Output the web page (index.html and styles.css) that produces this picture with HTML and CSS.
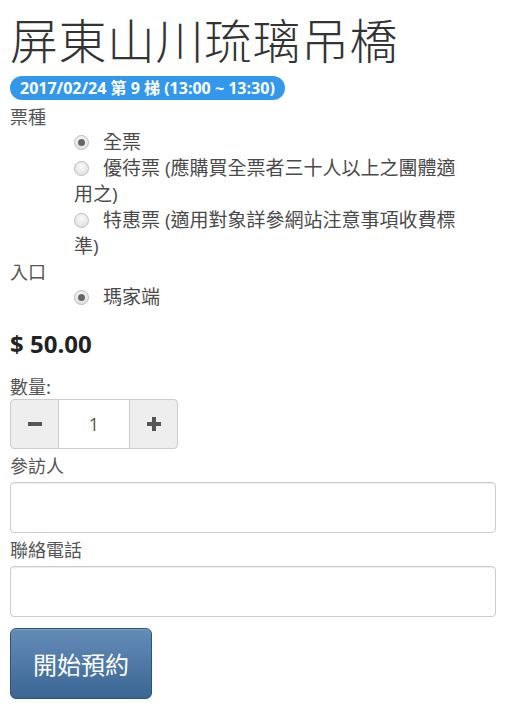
FILE: index.html
```html
<!DOCTYPE html>
<html lang="zh-Hant">
<head>
<meta charset="utf-8">
<title>屏東山川琉璃吊橋</title>
<link rel="stylesheet" href="styles.css">
</head>
<body>
<div class="page">
  <h1 class="title">屏東山川琉璃吊橋</h1>
  <div class="badge-row"><span class="badge">2017/02/24 第 9 梯 (13:00 ~ 13:30)</span></div>

  <div class="label">票種</div>
  <div class="radios">
    <div class="opt"><span class="radio checked"></span><span class="opt-text">全票</span></div>
    <div class="opt"><span class="radio"></span><span class="opt-text">優待票 (應購買全票者三十人以上之團體適用之)</span></div>
    <div class="opt"><span class="radio"></span><span class="opt-text">特惠票 (適用對象詳參網站注意事項收費標準)</span></div>
  </div>

  <div class="label label-gap">入口</div>
  <div class="radios">
    <div class="opt"><span class="radio checked"></span><span class="opt-text">瑪家端</span></div>
  </div>

  <div class="price">$ 50.00</div>

  <div class="label label-qty">數量:</div>
  <div class="qty">
    <button class="qty-btn" type="button" aria-label="minus">
      <svg width="16" height="16" viewBox="0 0 16 16"><rect x="1" y="6" width="14" height="4" fill="#555"/></svg>
    </button>
    <div class="qty-val">1</div>
    <button class="qty-btn" type="button" aria-label="plus">
      <svg width="16" height="16" viewBox="0 0 16 16"><rect x="1" y="6" width="14" height="4" fill="#555"/><rect x="6" y="1" width="4" height="14" fill="#555"/></svg>
    </button>
  </div>

  <div class="label label-gap2">參訪人</div>
  <div class="field"></div>

  <div class="label label-gap2">聯絡電話</div>
  <div class="field"></div>

  <button class="submit" type="button">開始預約</button>
</div>
</body>
</html>
```

FILE: styles.css
```css
* { box-sizing: border-box; }
html, body { margin: 0; padding: 0; background: #fff; }
body {
  font-family: "Open Sans", "Noto Sans CJK TC", sans-serif;
  color: #555;
}
.page { padding: 10px 16px 0 10px; }
.title {
  margin: 0;
  font-family: "Noto Sans CJK TC", sans-serif;
  font-weight: 300;
  font-size: 48px;
  line-height: 56px;
  color: #333;
  letter-spacing: 0.5px;
}
.badge-row { margin-top: 10px; height: 24px; }
.badge {
  display: inline-block;
  height: 24px;
  line-height: 24px;
  padding: 0 10px;
  border-radius: 12px;
  background: #3398ec;
  color: #fff;
  font-weight: 700;
  font-size: 16px;
  white-space: nowrap;
}
.label {
  font-family: "Noto Sans CJK TC", sans-serif;
  font-size: 18px;
  line-height: 25px;
  color: #555;
  margin-top: 4px;
}
.label-gap { margin-top: 0; }
.label-gap2 { margin-top: 4px; }
.label-qty { margin-top: 15px; }
.radios { margin-left: 64px; width: 400px; }
.opt {
  font-size: 19px;
  line-height: 26px;
  color: #4a4a4a;
}
.opt-text { font-family: "Open Sans", "Noto Sans CJK TC", sans-serif; }
.radio {
  display: inline-block;
  width: 15px;
  height: 15px;
  border-radius: 50%;
  border: 1px solid #bdbdbd;
  background: radial-gradient(circle at 50% 35%, #fafafa 0%, #e4e4e4 70%, #d6d6d6 100%);
  vertical-align: -1px;
  margin-right: 14px;
  position: relative;
}
.radio.checked::after {
  content: "";
  position: absolute;
  left: 3px; top: 3px;
  width: 7px; height: 7px;
  border-radius: 50%;
  background: #666;
}
.price {
  margin-top: 19px;
  font-weight: 700;
  font-size: 24px;
  line-height: 30px;
  color: #222;
}
.qty {
  display: flex;
  width: 168px;
  height: 50px;
}
.qty-btn {
  width: 49px;
  height: 50px;
  background: #eee;
  border: 1px solid #ccc;
  display: flex;
  align-items: center;
  justify-content: center;
  padding: 0;
}
.qty-btn:first-child { border-radius: 4px 0 0 4px; }
.qty-btn:last-child { border-radius: 0 4px 4px 0; }
.qty-val {
  width: 70px;
  border-top: 1px solid #ccc;
  border-bottom: 1px solid #ccc;
  display: flex;
  align-items: center;
  justify-content: center;
  font-size: 18px;
  color: #555;
  font-family: "Open Sans", sans-serif;
}
.field {
  margin-top: 4px;
  height: 51px;
  border: 1px solid #ccc;
  border-radius: 4px;
  box-shadow: inset 0 1px 1px rgba(0,0,0,0.075);
  background: #fff;
}
.submit {
  display: block;
  margin-top: 11px;
  width: 142px;
  height: 71px;
  border: 1px solid #2f5277;
  border-radius: 6px;
  background: linear-gradient(#648cb9, #3a6694);
  color: #fff;
  font-family: "Noto Sans CJK TC", sans-serif;
  font-size: 24px;
  padding: 0;
  box-shadow: inset 0 1px 0 rgba(255,255,255,0.15);
}
```
